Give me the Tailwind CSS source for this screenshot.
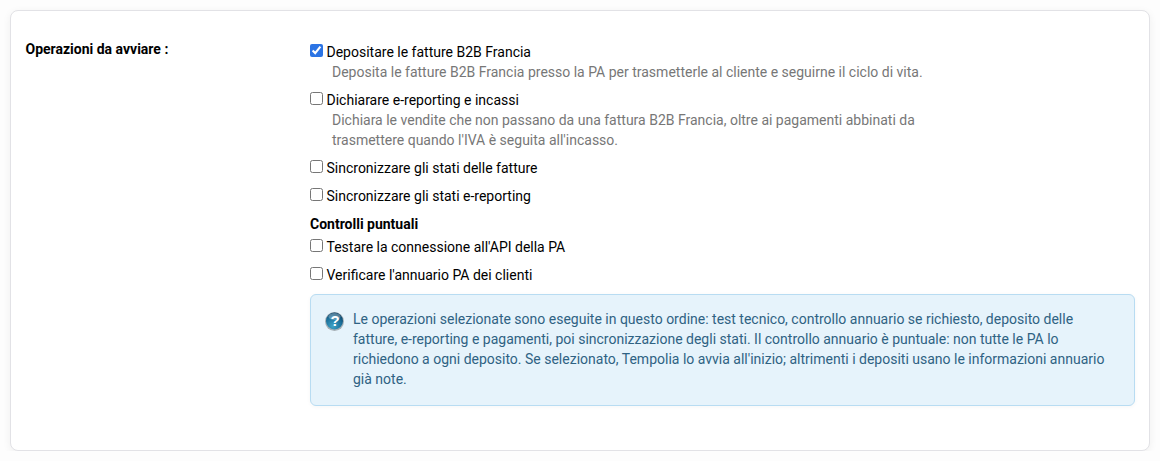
<!DOCTYPE html>
<html lang="it">
<head>
  <meta charset="UTF-8" />
  <title>Operazioni da avviare</title>
  <script src="https://cdn.jsdelivr.net/npm/@tailwindcss/browser@4"></script>
</head>
<body class="bg-[#fdfdfd] font-['Roboto',sans-serif] text-[14px] leading-[20px] text-black overflow-hidden">
  <div class="pt-[10px] px-[10px]">
    <div class="h-[441px] bg-white border border-[#e2e2e6] rounded-[8px] shadow-[0_2px_8px_rgba(0,0,0,0.06)] flex pt-[28px] pl-[14px] pr-[14px]">
      <div class="w-[285px] shrink-0 pl-[0.5px] font-bold">Operazioni da avviare :</div>
      <div class="flex-1 pt-[3px]">
        <label class="flex items-start h-[20px]">
          <input type="checkbox" checked class="w-[13px] h-[13px] mt-[2px] mr-[3.5px] accent-[#2c74e4]" />
          <span>Depositare le fatture B2B Francia</span>
        </label>
        <p class="ml-[22px] text-[#777777] w-[600px]">Deposita le fatture B2B Francia presso la PA per trasmetterle al cliente e seguirne il ciclo di vita.</p>
        <label class="flex items-start h-[20px] mt-[8px]">
          <input type="checkbox" class="w-[13px] h-[13px] mt-[2px] mr-[3.5px]" />
          <span>Dichiarare e-reporting e incassi</span>
        </label>
        <p class="ml-[22px] text-[#777777] w-[600px]">Dichiara le vendite che non passano da una fattura B2B Francia, oltre ai pagamenti abbinati da trasmettere quando l'IVA è seguita all'incasso.</p>
        <label class="flex items-start h-[20px] mt-[8px]">
          <input type="checkbox" class="w-[13px] h-[13px] mt-[2px] mr-[3.5px]" />
          <span>Sincronizzare gli stati delle fatture</span>
        </label>
        <label class="flex items-start h-[20px] mt-[8px]">
          <input type="checkbox" class="w-[13px] h-[13px] mt-[2px] mr-[3.5px]" />
          <span>Sincronizzare gli stati e-reporting</span>
        </label>
        <div class="font-bold mt-[8px] h-[20px]">Controlli puntuali</div>
        <label class="flex items-start h-[20px] mt-[3px]">
          <input type="checkbox" class="w-[13px] h-[13px] mt-[2px] mr-[3.5px]" />
          <span>Testare la connessione all'API della PA</span>
        </label>
        <label class="flex items-start h-[20px] mt-[8px]">
          <input type="checkbox" class="w-[13px] h-[13px] mt-[2px] mr-[3.5px]" />
          <span>Verificare l'annuario PA dei clienti</span>
        </label>
        <div class="mt-[9px] h-[112px] bg-[#e6f3fb] border border-[#b8dcf2] rounded-[6px] shadow-[0_1px_4px_rgba(0,0,0,0.04)] flex pt-[14px] pl-[14px] pr-[20px] text-[#2f6283]">
          <svg class="w-[20px] h-[20px] shrink-0 mt-[2px] mr-[8px]" viewBox="0 0 20 20">
            <defs>
              <radialGradient id="q" cx="0.4" cy="0.8" r="0.85">
                <stop offset="0" stop-color="#3fa3c6" />
                <stop offset="0.6" stop-color="#1a6f9a" />
                <stop offset="1" stop-color="#0b3a5c" />
              </radialGradient>
            </defs>
            <circle cx="9.5" cy="10.5" r="9.5" fill="#000" opacity="0.28" />
            <circle cx="9.5" cy="10" r="8.5" fill="url(#q)" />
            <ellipse cx="9.5" cy="5.5" rx="6" ry="3.6" fill="#fff" opacity="0.28" />
            <text x="10" y="15" text-anchor="middle" font-family="Liberation Sans" font-weight="700" font-size="15" fill="#fff">?</text>
          </svg>
          <p>Le operazioni selezionate sono eseguite in questo ordine: test tecnico, controllo annuario se richiesto, deposito delle fatture, e-reporting e pagamenti, poi sincronizzazione degli stati. Il controllo annuario è puntuale: non tutte le PA lo richiedono a ogni deposito. Se selezionato, Tempolia lo avvia all'inizio; altrimenti i depositi usano le informazioni annuario già note.</p>
        </div>
      </div>
    </div>
  </div>
</body>
</html>
